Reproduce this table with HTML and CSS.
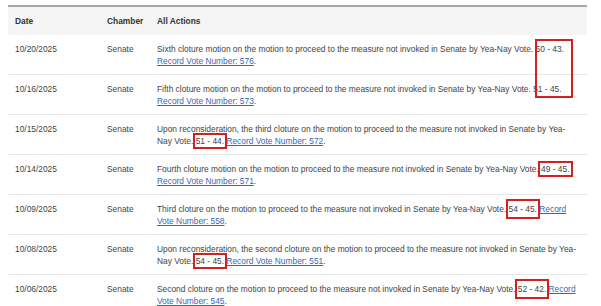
FILE: index.html
```html
<!DOCTYPE html>
<html>
<head>
<meta charset="utf-8">
<link rel="stylesheet" href="styles.css">
</head>
<body>
<div class="wrap">
<table class="actions">
<thead>
<tr><th class="c-date">Date</th><th class="c-ch">Chamber</th><th class="c-act">All Actions</th></tr>
</thead>
<tbody>
<tr><td>10/20/2025</td><td>Senate</td><td>Sixth cloture motion on the motion to proceed to the measure not invoked in Senate by Yea-Nay Vote. 50 - 43. <a href="#">Record Vote Number: 576</a>.</td></tr>
<tr><td>10/16/2025</td><td>Senate</td><td>Fifth cloture motion on the motion to proceed to the measure not invoked in Senate by Yea-Nay Vote. 51 - 45. <a href="#">Record Vote Number: 573</a>.</td></tr>
<tr><td>10/15/2025</td><td>Senate</td><td>Upon reconsideration, the third cloture on the motion to proceed to the measure not invoked in Senate by Yea-Nay Vote. <span class="mark">51 - 44.</span> <a href="#">Record Vote Number: 572</a>.</td></tr>
<tr><td>10/14/2025</td><td>Senate</td><td>Fourth cloture motion on the motion to proceed to the measure not invoked in Senate by Yea-Nay Vote. <span class="mark">49 - 45.</span> <a href="#">Record Vote Number: 571</a>.</td></tr>
<tr><td>10/09/2025</td><td>Senate</td><td>Third cloture on the motion to proceed to the measure not invoked in Senate by Yea-Nay Vote. <span class="mark mark-tall">54 - 45.</span> <a href="#">Record Vote Number: 558</a>.</td></tr>
<tr><td>10/08/2025</td><td>Senate</td><td>Upon reconsideration, the second cloture on the motion to proceed to the measure not invoked in Senate by Yea-Nay Vote. <span class="mark">54 - 45.</span> <a href="#">Record Vote Number: 551</a>.</td></tr>
<tr><td>10/06/2025</td><td>Senate</td><td>Second cloture on the motion to proceed to the measure not invoked in Senate by Yea-Nay Vote. <span class="mark mark-tall">52 - 42.</span> <a href="#">Record Vote Number: 545</a>.</td></tr>
</tbody>
</table>
<div class="box-tall"></div>
</div>
</body>
</html>
```
FILE: styles.css
```css
html, body { margin: 0; padding: 0; background: #fff; }
body { font-family: "Liberation Sans", Arial, sans-serif; font-size: 8.4px; color: #444; }
.wrap { position: relative; padding: 5px 14px 0 8px; }
.actions { width: 579px; table-layout: fixed; border-collapse: collapse; border-top: 2px solid #a8a8a8; }
.actions th { background: #f5f5f5; text-align: left; font-weight: bold; color: #333; height: 28px; padding: 0 7px; vertical-align: middle; }
.c-date { width: 78px; }
.c-ch { width: 36px; }
.actions td { padding: 8px 7px 7px; line-height: 12px; vertical-align: top; border-bottom: 1px solid #e6e6e6; }
.actions td:nth-child(3) { padding-right: 9px; }
.actions td:nth-child(1), .actions td:nth-child(2) { white-space: nowrap; }
a { color: #3a68b0; text-decoration: underline; }
.mark { outline: 2px solid #d42020; outline-offset: 1px; }
.mark-tall { padding: 2px 0; }
.box-tall { position: absolute; left: 535px; top: 39px; width: 34px; height: 55px; border: 2px solid #d42020; }
```
